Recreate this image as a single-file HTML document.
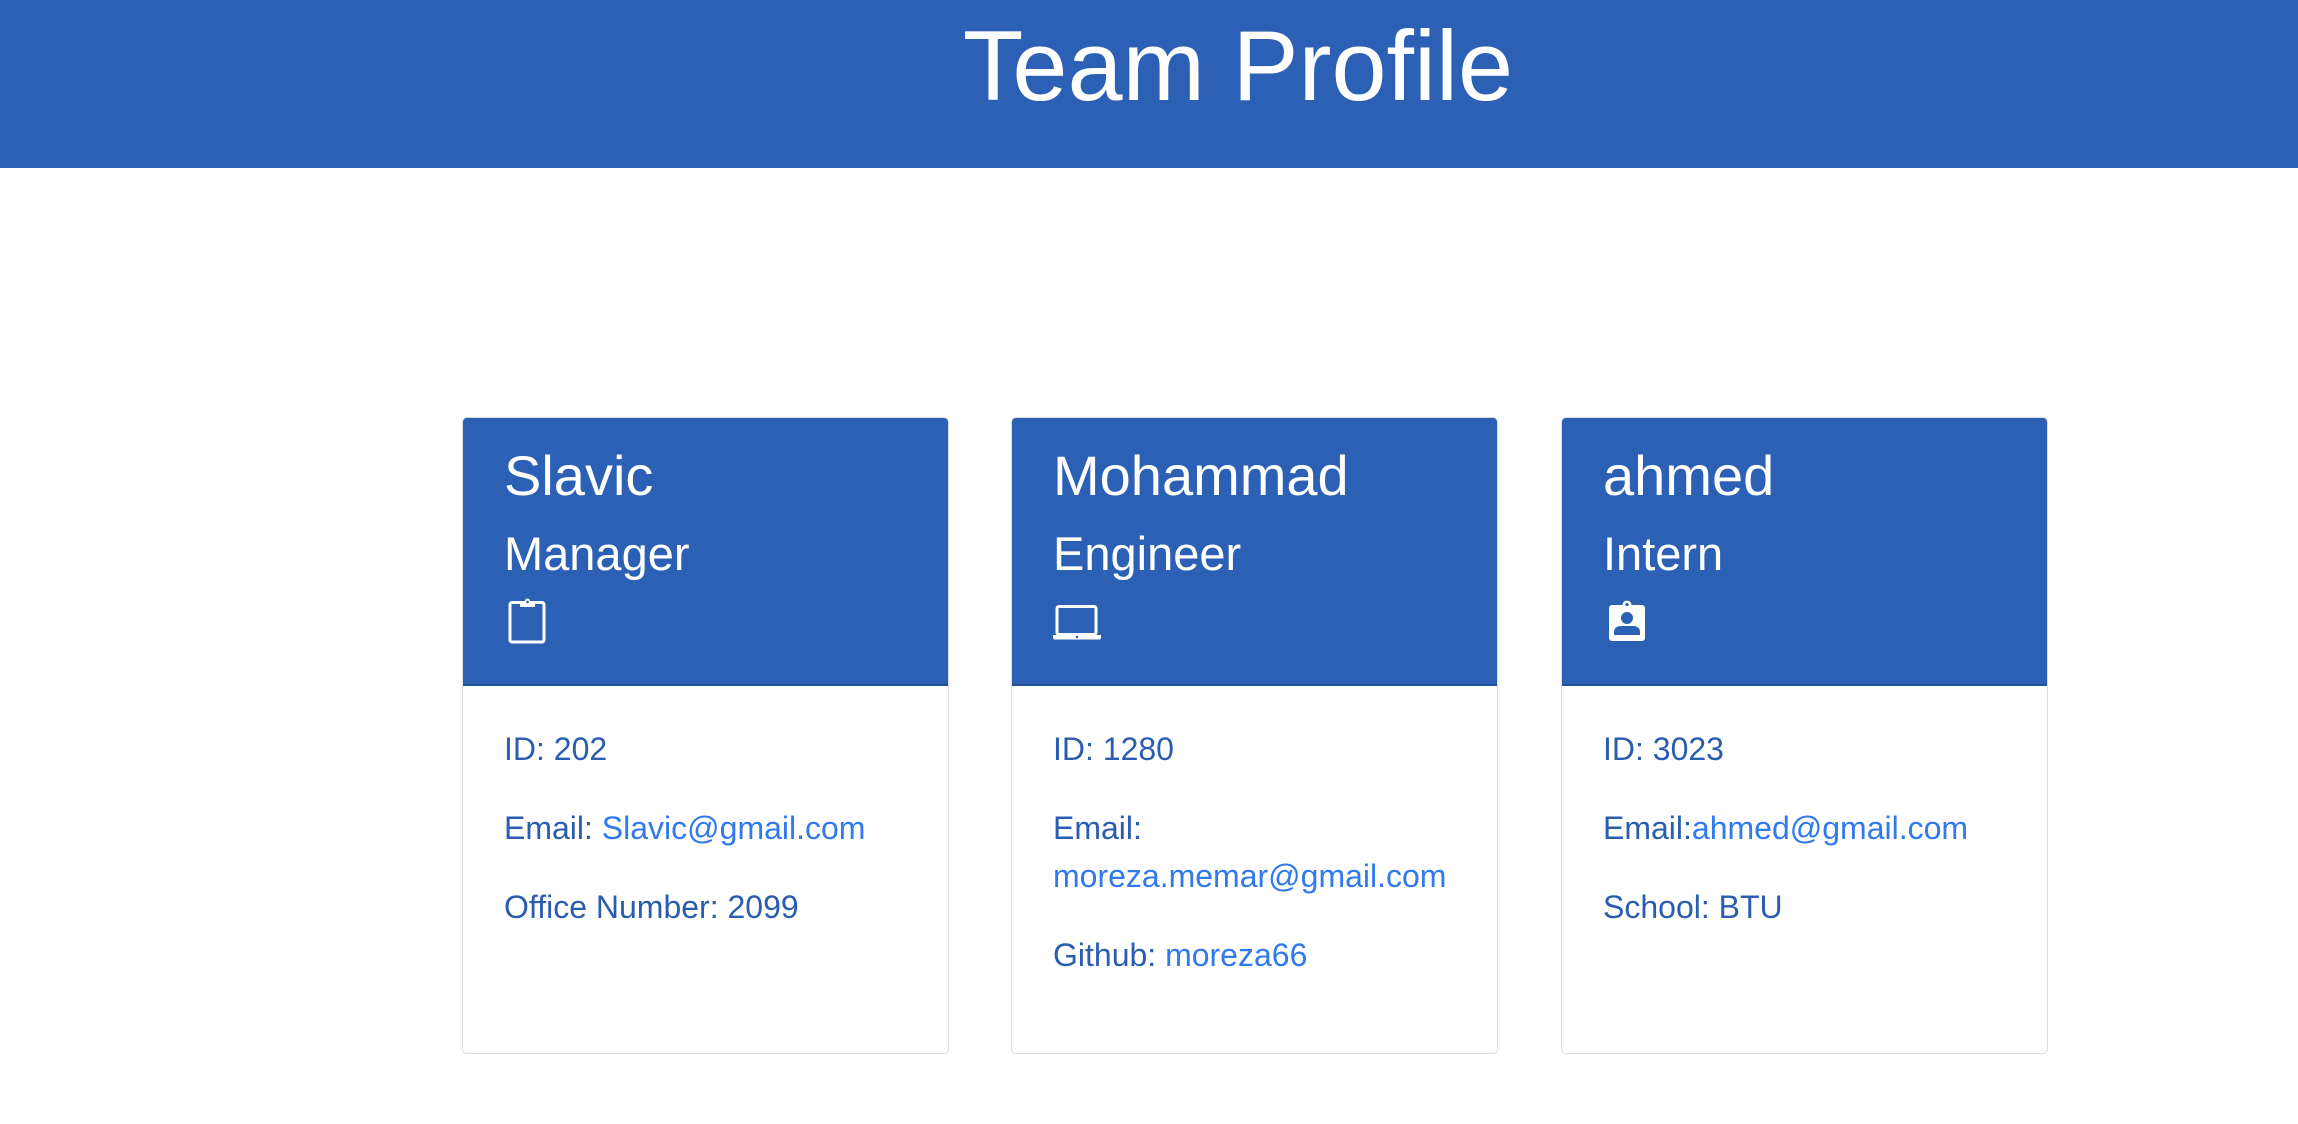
<!DOCTYPE html>
<html><head><meta charset="utf-8"><style>
*{box-sizing:border-box;margin:0;padding:0}
body{width:2298px;height:1124px;background:#fff;font-family:"Liberation Sans",Arial,sans-serif;position:relative;overflow:hidden}
.top{position:absolute;left:0;top:0;width:2298px;height:168px;background:#2b60b5;overflow:hidden}
.top h1{position:absolute;left:0;width:2476px;text-align:center;top:8px;font-size:99px;font-weight:400;color:#fff;line-height:116px;white-space:nowrap}
.card{position:absolute;top:417px;width:487px;height:637px;border:1.5px solid #dcdcdc;border-radius:5px;overflow:hidden;background:#fff}
.hd{height:268px;background:#2b60b5;padding:24px 0 0 41px;color:#fff;border-bottom:2px solid #23509a}
.hd .n{font-size:56px;line-height:67px}
.hd .r{font-size:47px;line-height:56px;margin-top:17px}
.hd svg{position:absolute;top:180px}
.bd{padding:39px 40px 0 41px;color:#2a5db0;font-size:32px;line-height:48px}
.bd p{margin-bottom:31px}
.bd a{color:#3079ef;text-decoration:none}
</style></head><body>
<div class="top"><h1>Team Profile</h1></div>

<div class="card" style="left:462px">
<div class="hd"><div class="n">Slavic</div><div class="r">Manager</div>
<svg style="left:45px" width="39" height="46" viewBox="0 0 39 46"><path d="M12 4.5H4a2 2 0 0 0-2 2V42a2 2 0 0 0 2 2h30a2 2 0 0 0 2-2V6.5a2 2 0 0 0-2-2h-8" fill="none" stroke="#fff" stroke-width="3"/><path d="M12 3h5a2.5 2.5 0 0 1 5 0h5v6H12z" fill="#fff"/><circle cx="19.5" cy="4" r="1.3" fill="#2b60b5"/></svg>
</div>
<div class="bd"><p>ID: 202</p><p>Email: <a>Slavic@gmail.com</a></p><p>Office Number: 2099</p></div>
</div>

<div class="card" style="left:1011px">
<div class="hd"><div class="n">Mohammad</div><div class="r">Engineer</div>
<svg style="left:40px;top:187px" width="50" height="36" viewBox="0 0 50 36"><rect x="5" y="1.5" width="39" height="28" rx="2" fill="none" stroke="#fff" stroke-width="3"/><path d="M1 30h48v2.5a2 2 0 0 1-2 2H3a2 2 0 0 1-2-2z" fill="#fff"/><circle cx="25" cy="32" r="1.3" fill="#2b60b5"/></svg>
</div>
<div class="bd"><p>ID: 1280</p><p>Email:<br><a>moreza.memar@gmail.com</a></p><p>Github: <a>moreza66</a></p></div>
</div>

<div class="card" style="left:1561px">
<div class="hd"><div class="n">ahmed</div><div class="r">Intern</div>
<svg style="left:46px;top:182px" width="38" height="42" viewBox="0 0 38 42"><rect x="1" y="5" width="36" height="36" rx="3" fill="#fff"/><circle cx="19" cy="5" r="4.5" fill="#fff"/><circle cx="19" cy="4.5" r="1.6" fill="#2b60b5"/><circle cx="19" cy="18" r="6" fill="#2b60b5"/><path d="M6 35v-3c0-4 3-6 7-6h12c4 0 7 2 7 6v3z" fill="#2b60b5"/></svg>
</div>
<div class="bd"><p>ID: 3023</p><p>Email:<a>ahmed@gmail.com</a></p><p>School: BTU</p></div>
</div>
</body></html>
